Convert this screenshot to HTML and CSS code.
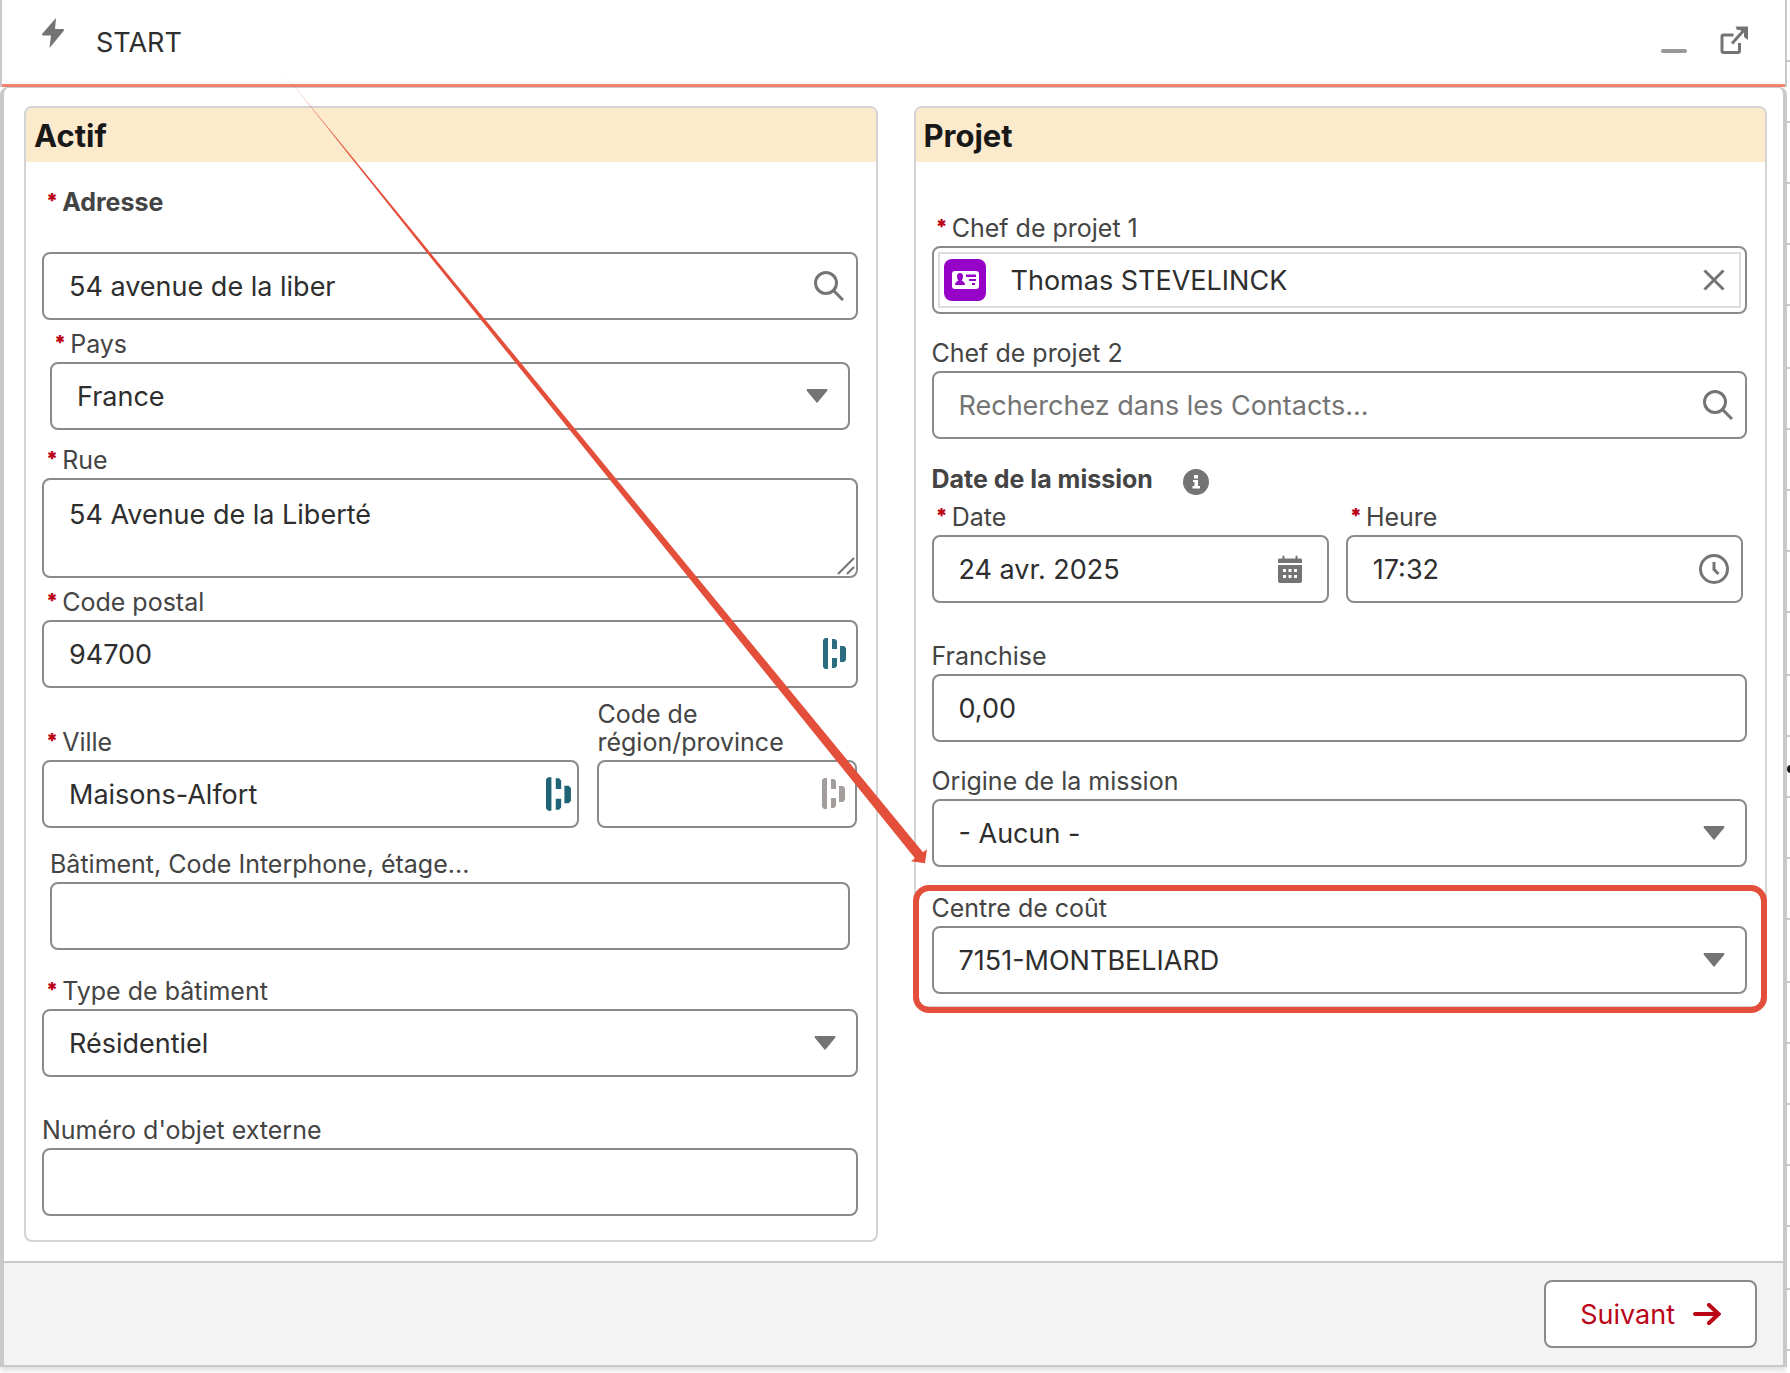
FILE: index.html
```html
<!DOCTYPE html>
<html lang="fr">
<head>
  <meta charset="UTF-8" />
  <meta name="viewport" content="width=device-width, initial-scale=1.0"/>
  <title>START</title>
  <link rel="stylesheet" href="styles.css">
</head>
<body>
  <div class="panel">
    <header class="panel-header">
      <svg class="bolt" width="22" height="30" viewBox="0 0 22 30"><path d="M14 0 L0 16 Q0 17.500 1 17.500 H9 L7.500 30 L22 12.500 Q22.500 11 21 11 H13 Z"/></svg>
      <h1>START</h1>
      <button class="icon-btn" aria-label="Réduire">
        <svg width="28" height="36" viewBox="0 0 28 36"><rect x="1" y="31" width="26" height="4" rx="2" fill="#999"/></svg>
      </button>
      <button class="icon-btn" aria-label="Ouvrir">
        <svg width="28" height="36" viewBox="0 0 28 36"><path class="line" d="M13.500 17 H3.500 Q2 17 2 18.500 V33 Q2 34.500 3.500 34.500 H18 Q19.500 34.500 19.500 33 V25 M12 25.500 L25 11"/><path d="M15.500 8.500 H28 V22 L24 19 V15 L20 12 H17 Z"/></svg>
      </button>
    </header>

    <form class="panel-body">
      <div class="columns">
        <section class="card">
          <h2>Actif</h2>
          <div class="fields">
            <div class="field address">
              <label for="adresse"><span class="req">*</span>Adresse</label>
              <div class="control">
                <input type="text" id="adresse" value="54 avenue de la liber" />
                <svg class="icon search" viewBox="0 0 30 30"><circle cx="12" cy="12" r="10.500"/><path d="M19.500 19.500 L29 29"/></svg>
              </div>
            </div>
            <div class="field inset country">
              <label for="pays"><span class="req">*</span>Pays</label>
              <div class="control">
                <select id="pays"><option>France</option></select>
                <svg class="icon arrow" viewBox="0 0 22 14"><path d="M1 0 H21 Q22 1 21 2 L11.500 13.500 Q11 14 10.500 13.500 L1 2 Q0 1 1 0 Z"/></svg>
              </div>
            </div>
            <div class="field street">
              <label for="rue"><span class="req">*</span>Rue</label>
              <div class="control">
                <textarea id="rue">54 Avenue de la Liberté</textarea>
                <svg class="resizer" viewBox="0 0 20 20"><path d="M2 18 L18 2 M11 18 L18 11"/></svg>
              </div>
            </div>
            <div class="field zip">
              <label for="cp"><span class="req">*</span>Code postal</label>
              <div class="control">
                <input type="text" id="cp" value="94700" />
                <svg class="icon dash" viewBox="0 0 24 32"><path d="M0 2 L2 0 H5 V31 H2 L0 29 Z M9 1 H12 L14 3 V11 H9 Z M9 20 H14 V28 L12 30 H9 Z M17 8 H21 L23 10 V22 L21 24 H17 Z"/></svg>
              </div>
            </div>
            <div class="city-row">
              <div class="field">
                <label for="ville"><span class="req">*</span>Ville</label>
                <div class="control">
                  <input type="text" id="ville" value="Maisons-Alfort" />
                  <svg class="icon dash large" viewBox="0 0 24 32"><path d="M0 2 L2 0 H5 V31 H2 L0 29 Z M9 1 H12 L14 3 V11 H9 Z M9 20 H14 V28 L12 30 H9 Z M17 8 H21 L23 10 V22 L21 24 H17 Z"/></svg>
                </div>
              </div>
              <div class="field">
                <label for="region">Code de région/province</label>
                <div class="control">
                  <input type="text" id="region" />
                  <svg class="icon dash muted" viewBox="0 0 24 32"><path d="M0 2 L2 0 H5 V31 H2 L0 29 Z M9 1 H12 L14 3 V11 H9 Z M9 20 H14 V28 L12 30 H9 Z M17 8 H21 L23 10 V22 L21 24 H17 Z"/></svg>
                </div>
              </div>
            </div>
            <div class="field inset building">
              <label for="batiment">Bâtiment, Code Interphone, étage...</label>
              <div class="control"><input type="text" id="batiment" /></div>
            </div>
            <div class="field type">
              <label for="type"><span class="req">*</span>Type de bâtiment</label>
              <div class="control">
                <select id="type"><option>Résidentiel</option></select>
                <svg class="icon arrow" viewBox="0 0 22 14"><path d="M1 0 H21 Q22 1 21 2 L11.500 13.500 Q11 14 10.500 13.500 L1 2 Q0 1 1 0 Z"/></svg>
              </div>
            </div>
            <div class="field separated">
              <label for="externe">Numéro d'objet externe</label>
              <div class="control"><input type="text" id="externe" /></div>
            </div>
          </div>
        </section>

        <section class="card project">
          <h2>Projet</h2>
          <div class="fields">
            <div class="field manager">
              <label for="chef1"><span class="req">*</span>Chef de projet 1</label>
              <div class="control lookup">
                <div class="pill">
                  <svg class="contact" viewBox="0 0 42 42"><rect width="42" height="42" rx="8" fill="#9602c7"/><rect x="8" y="12" width="27" height="18" rx="3" fill="#fff"/><path fill="#9602c7" d="M16 14 Q19 14 19 17.500 Q19 20 17.500 21.500 Q21 23 21 26 H11 Q11 23 14.500 21.500 Q13 20 13 17.500 Q13 14 16 14 Z M22 15.500 H32 V18 H22 Z M25 20 H32 V22 H25 Z M28 24 H31 V26 H28 Z"/></svg>
                  <input type="text" id="chef1" value="Thomas STEVELINCK" />
                  <button type="button" class="clear" aria-label="Effacer"><svg width="22" height="22" viewBox="0 0 22 22"><path d="M1.500 1.500 L20.500 20.500 M20.500 1.500 L1.500 20.500"/></svg></button>
                </div>
              </div>
            </div>
            <div class="field spaced">
              <label for="chef2">Chef de projet 2</label>
              <div class="control">
                <input type="text" id="chef2" placeholder="Recherchez dans les Contacts..." />
                <svg class="icon search" viewBox="0 0 30 30"><circle cx="12" cy="12" r="10.500"/><path d="M19.500 19.500 L29 29"/></svg>
              </div>
            </div>
            <fieldset class="mission">
              <legend>Date de la mission
                <svg class="info" viewBox="0 0 26 26"><circle cx="13" cy="13" r="13" fill="#747474"/><path fill="#fff" d="M11 6 H15 V9.500 H11 Z M10 11 H15 V17 H17 V19.500 H9.500 V17 H11.500 V13 H10 Z"/></svg>
              </legend>
              <div class="date-row">
                <div class="field">
                  <label for="date"><span class="req">*</span>Date</label>
                  <div class="control">
                    <input type="text" id="date" value="24 avr. 2025" />
                    <svg class="icon calendar" viewBox="0 0 24 28"><path fill-rule="evenodd" d="M1 3.500 H4.500 V1 Q5.500 0 6.500 1 V3.500 H17.500 V1 Q18.500 0 19.500 1 V3.500 H23 L24 4.500 V8 H0 V4.500 Z M0 10 H24 V26 Q24 28 22 28 H2 Q0 28 0 26 Z M5 14 V17 H8 V14 Z M10.500 14 V17 H13.500 V14 Z M16 14 V17 H19 V14 Z M5 20 V23 H8 V20 Z M10.500 20 V23 H13.500 V20 Z M16 20 V23 H19 V20 Z"/></svg>
                  </div>
                </div>
                <div class="field">
                  <label for="heure"><span class="req">*</span>Heure</label>
                  <div class="control">
                    <input type="text" id="heure" value="17:32" />
                    <svg class="icon clock" viewBox="0 0 30 30"><circle cx="15" cy="15" r="13.500"/><path d="M15 8 V15.500 L19.500 20"/></svg>
                  </div>
                </div>
              </div>
            </fieldset>
            <div class="field separated">
              <label for="franchise">Franchise</label>
              <div class="control"><input type="text" id="franchise" value="0,00" /></div>
            </div>
            <div class="field spaced">
              <label for="origine">Origine de la mission</label>
              <div class="control">
                <select id="origine"><option>- Aucun -</option></select>
                <svg class="icon arrow" viewBox="0 0 22 14"><path d="M1 0 H21 Q22 1 21 2 L11.500 13.500 Q11 14 10.500 13.500 L1 2 Q0 1 1 0 Z"/></svg>
              </div>
            </div>
            <div class="field cost-centre">
              <label for="centre">Centre de coût</label>
              <div class="control">
                <select id="centre"><option>7151-MONTBELIARD</option></select>
                <svg class="icon arrow" viewBox="0 0 22 14"><path d="M1 0 H21 Q22 1 21 2 L11.500 13.500 Q11 14 10.500 13.500 L1 2 Q0 1 1 0 Z"/></svg>
              </div>
            </div>
          </div>
        </section>
      </div>

      <footer class="panel-footer">
        <button type="button" class="next-btn">Suivant
          <svg width="28" height="22" viewBox="0 0 28 22"><path d="M2 11 H25 M16 2 L25.500 11 L16 20"/></svg>
        </button>
      </footer>
    </form>
  </div>

  <!-- edge of the list behind the panel -->
  <div class="behind"><span class="dot"></span></div>

  <svg class="pointer" viewBox="0 0 1790 1373" preserveAspectRatio="none">
    <defs>
      <linearGradient id="fade" gradientUnits="userSpaceOnUse" x1="270" y1="56" x2="350" y2="155">
        <stop offset="0" stop-color="#e44f3b" stop-opacity="0"/>
        <stop offset="1" stop-color="#e44f3b"/>
      </linearGradient>
    </defs>
    <path fill="url(#fade)" d="M278 66 L430 252 L923 851 L927 848 L925 862 L911 860 L915 857 L428 254 Z"/>
  </svg>
</body>
</html>
```
FILE: styles.css
```css
* {
  box-sizing: border-box;
}
body {
  position: relative;
  display: flex;
  min-height: 100vh;
  margin: 0;
  background: #fff;
  color: #2e2e2e;
  font-family: Inter, "Liberation Sans", sans-serif;
  font-size: 27px;
  overflow-x: hidden;
}
button, input, select, textarea {
  font: inherit;
  color: inherit;
}
.panel {
  flex: 1;
  display: flex;
  flex-direction: column;
  min-width: 0;
}
.panel-header {
  display: flex;
  align-items: flex-start;
  height: 87px;
  padding: 18px 37px 0 40px;
  border: solid #c9c9c9;
  border-width: 0 2px;
  box-shadow: inset 0 -3px #f4836f;
}
.panel-header svg {
  display: block;
  fill: #747474;
}
.panel-header h1 {
  flex: 1;
  margin: 0 0 0 32px;
  font-size: 27px;
  font-weight: 400;
  line-height: 50px;
}
.icon-btn {
  margin-left: 32px;
  padding: 0;
  border: none;
  background: none;
  cursor: pointer;
}
.icon-btn .line {
  fill: none;
  stroke: #747474;
  stroke-width: 3;
}
.panel-body {
  display: flex;
  flex-direction: column;
  margin-bottom: 8px;
  border: solid #c9c9c9;
  border-width: 1px 4px 2px;
  border-radius: 8px 8px 0 0;
  box-shadow: 0 3px 6px rgba(0, 0, 0, 0.15);
}
.columns {
  display: grid;
  grid-template-columns: 1fr 1fr;
  align-items: start;
  gap: 36px;
  padding: 18px 16px 19px 20px;
}
.card {
  border: 2px solid #d4d4d4;
  border-radius: 8px;
  background: #fff;
}
.card h2 {
  margin: 0;
  padding: 2px 8px 0;
  border-radius: 6px 6px 0 0;
  background: #fceacd;
  color: #181818;
  font-size: 31px;
  font-weight: 700;
  line-height: 52px;
}
.fields {
  padding: 0 18px 24px 16px;
}
.project .fields {
  padding-bottom: 12px;
}
.field label {
  display: block;
  margin-bottom: 4px;
  color: #444;
  font-size: 25px;
  line-height: 28px;
}
.req {
  margin: 0 4px;
  color: #ba0517;
  font-size: 20px;
  font-weight: 900;
  line-height: 0;
  vertical-align: 3px;
}
.control {
  position: relative;
}
.control > input, .control > select, .control > textarea, .lookup {
  display: block;
  width: 100%;
  height: 68px;
  padding: 0 25px;
  border: 2px solid #8a8a8a;
  border-radius: 8px;
  background: #fff;
  appearance: none;
  outline: none;
}
.control > textarea {
  height: 100px;
  padding-top: 17px;
  line-height: 36px;
  resize: none;
}
input::placeholder {
  color: #747474;
  opacity: 1;
}

/* spacing between fields */
.address {
  padding-top: 26px;
}
.address label {
  margin-bottom: 36px;
  font-weight: 700;
}
.country, .zip {
  margin-top: 10px;
}
.city-row {
  margin-top: 12px;
}
.inset {
  padding: 0 8px;
}
.street {
  margin-top: 16px;
}
.building {
  margin-top: 22px;
}
.type {
  margin-top: 27px;
}
.spaced {
  margin-top: 25px;
}
.separated {
  margin-top: 39px;
}
.manager {
  padding-top: 52px;
}
.city-row {
  display: grid;
  grid-template-columns: 31fr 15fr;
  align-items: end;
  gap: 18px;
}
.mission {
  margin: 26px 0 0;
  padding: 0;
  border: none;
}
.mission legend {
  display: flex;
  align-items: flex-start;
  gap: 30px;
  height: 28px;
  margin-bottom: 10px;
  padding: 0;
  color: #444;
  font-size: 25px;
  font-weight: 700;
  line-height: 28px;
}
.info {
  width: 26px;
  height: 26px;
  margin-top: 4px;
}
.date-row {
  display: grid;
  grid-template-columns: 1fr 1fr;
  gap: 17px;
  padding-right: 4px;
}

/* icons inside the controls */
.icon {
  position: absolute;
  top: 0;
  bottom: 0;
  margin: auto 0;
  fill: #747474;
  pointer-events: none;
}
.search, .clock {
  right: 14px;
  width: 30px;
  height: 30px;
  fill: none;
  stroke: #747474;
  stroke-width: 3;
}
.arrow {
  right: 22px;
  width: 22px;
  height: 14px;
}
.calendar {
  right: 27px;
  width: 24px;
  height: 28px;
}
.dash {
  right: 11px;
  width: 24px;
  height: 32px;
  fill: #2b6c7e;
}
.dash.large {
  right: 7px;
  width: 26px;
  height: 35px;
  fill: #1f6376;
}
.dash.muted {
  fill: #a39e9b;
}
.resizer {
  position: absolute;
  right: 2px;
  bottom: 2px;
  width: 20px;
  height: 20px;
  fill: none;
  stroke: #747474;
  stroke-width: 2;
}
.lookup {
  padding: 4px;
}
.pill {
  display: flex;
  align-items: center;
  height: 56px;
  padding: 0 14px 0 4px;
  border: 2px solid #dcdcdc;
}
.contact {
  width: 42px;
  height: 42px;
}
.pill input {
  flex: 1;
  min-width: 0;
  margin-left: 25px;
  padding: 0;
  border: none;
  background: none;
  outline: none;
}
.clear {
  display: flex;
  padding: 0;
  border: none;
  background: none;
  cursor: pointer;
}
.clear path {
  fill: none;
  stroke: #747474;
  stroke-width: 3;
}

/* red outline around the cost centre field */
.cost-centre {
  position: relative;
  margin-top: 27px;
}
.cost-centre::after {
  content: "";
  position: absolute;
  inset: -9px -20px -19px -19px;
  border: 6px solid #e44f3b;
  border-radius: 16px;
  pointer-events: none;
}
.pointer {
  position: absolute;
  top: 0;
  left: 0;
  width: 100%;
  height: 100%;
  pointer-events: none;
}

.panel-footer {
  display: flex;
  justify-content: flex-end;
  padding: 17px 26px;
  border-top: 2px solid #c9c9c9;
  background: #f3f3f3;
}
.next-btn {
  display: flex;
  align-items: center;
  gap: 18px;
  height: 68px;
  padding: 0 34px;
  border: 2px solid #8a8a8a;
  border-radius: 8px;
  background: #fff;
  color: #ba0517;
  cursor: pointer;
}
.next-btn path {
  fill: none;
  stroke: #ba0517;
  stroke-width: 4;
  stroke-linecap: round;
}
.behind {
  display: flex;
  flex-direction: column;
  width: 3px;
  padding-top: 765px;
  overflow: hidden;
  background: repeating-linear-gradient(#fff 0 60px, #c9c9c9 60px 62px, #fff 62px 121px, #c9c9c9 121px 123px, #fff 123px 182px, #c9c9c9 182px 184px, #fff 184px 243px, #c9c9c9 243px 245px, #fff 245px 304px, #c9c9c9 304px 306px, #fff 306px 307px);
}
.dot {
  width: 8px;
  height: 8px;
  border-radius: 4px;
  background: #181818;
}
```
